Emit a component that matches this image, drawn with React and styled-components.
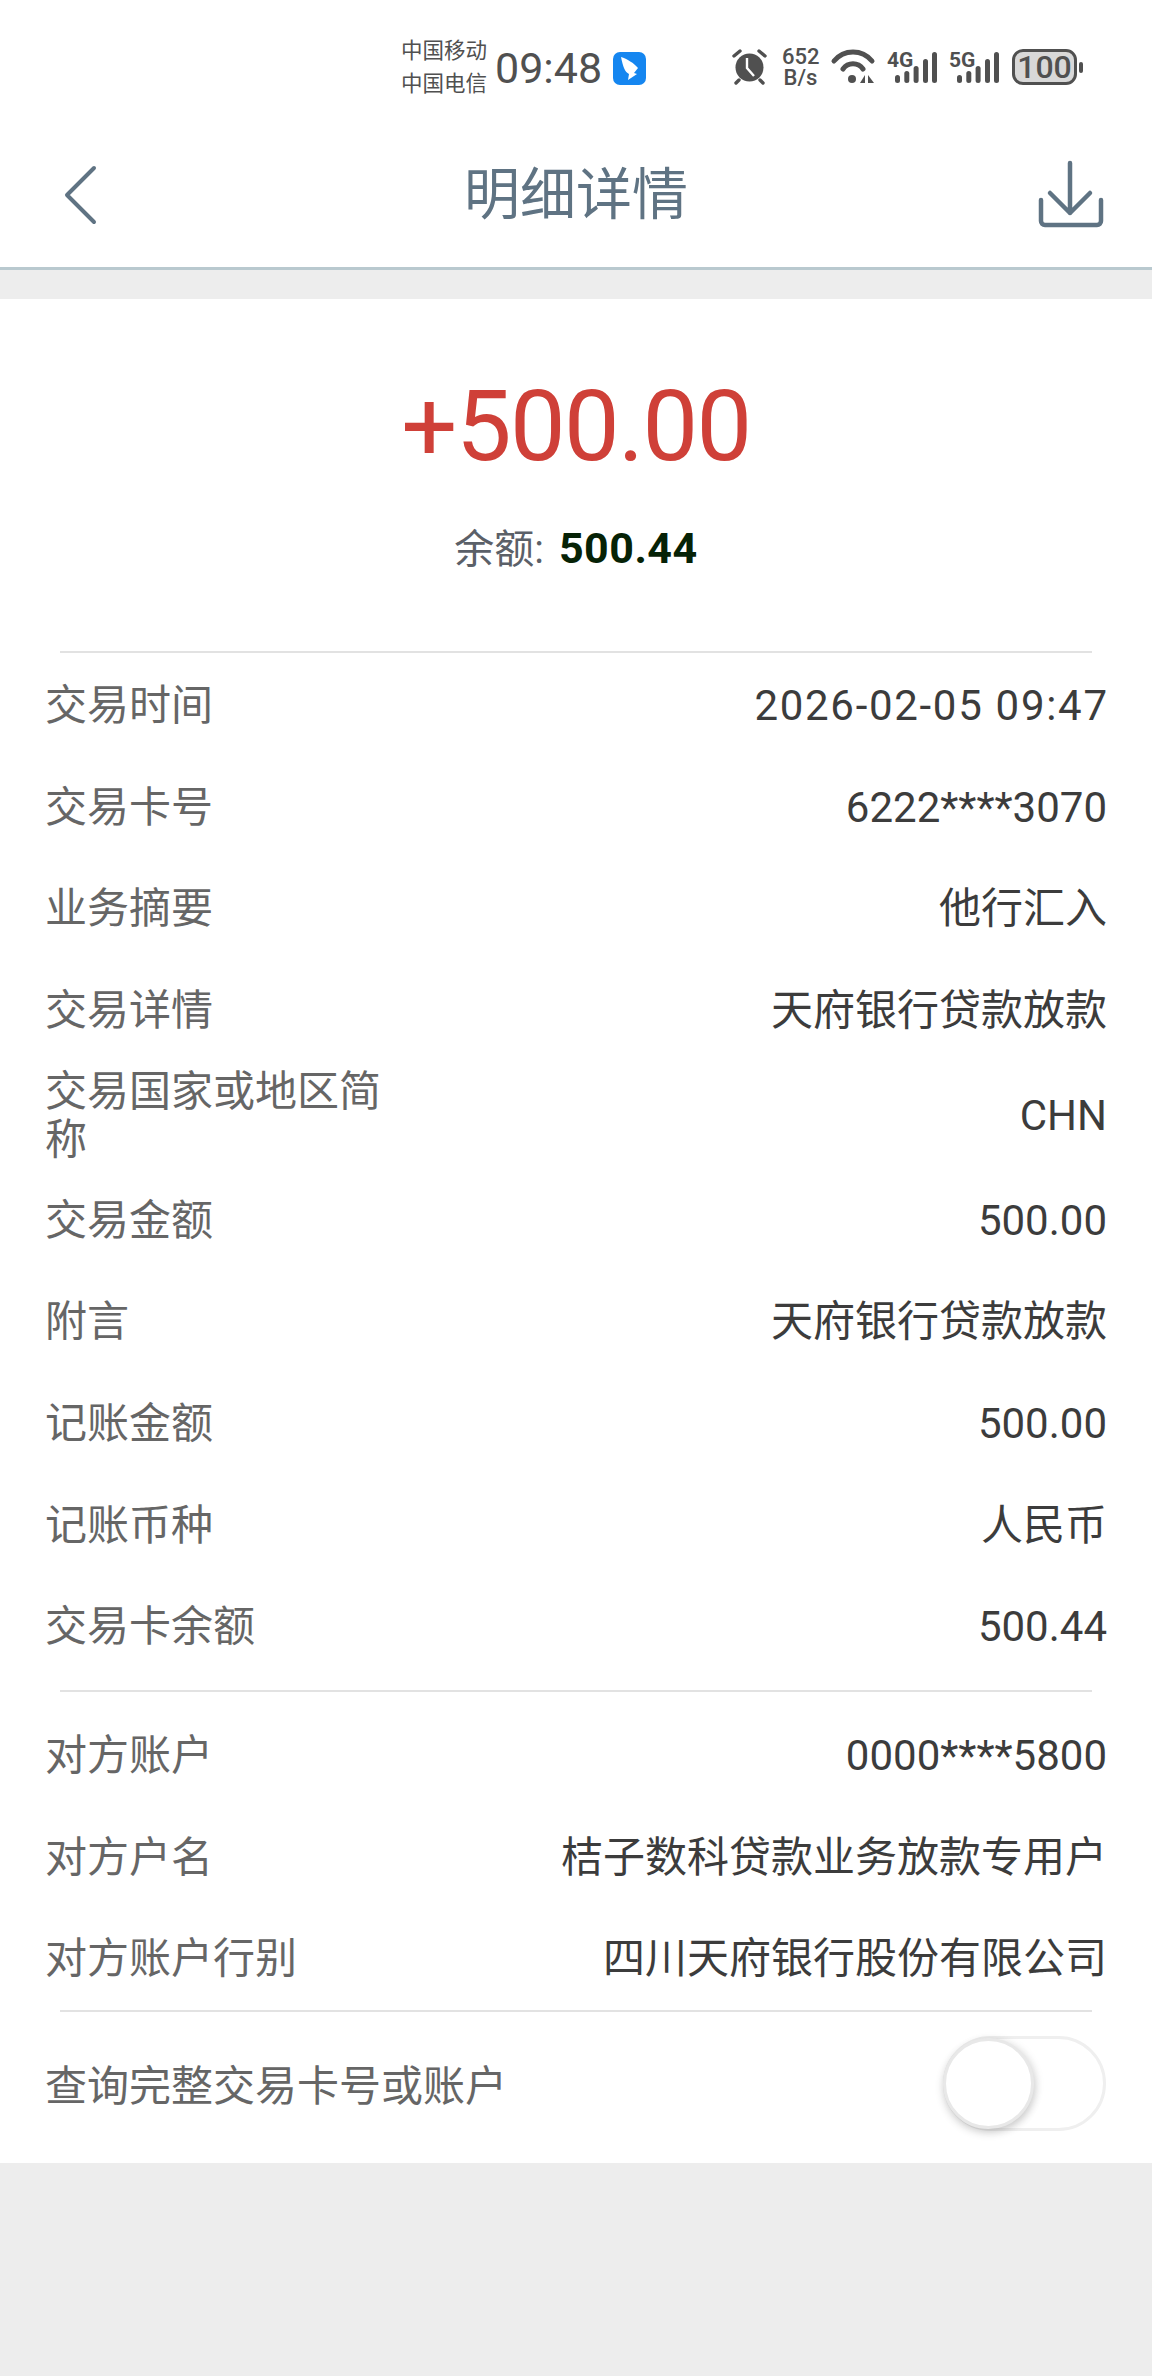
import React from "react";
import styled, { createGlobalStyle } from "styled-components";

const Global = createGlobalStyle`
  html, body { margin: 0; padding: 0; background: #ededed; }
  body { font-family: "Roboto", "Noto Sans CJK SC", sans-serif; }
`;
const Page = styled.div`
  width: 1152px; height: 2376px; background: #ededed; display: flex; flex-direction: column; overflow: hidden;
`;
const TopArea = styled.header`
  background: #fff; height: 267px; border-bottom: 3px solid #b9c9cf; flex: none; display: flex; flex-direction: column;
`;
const StatusBar = styled.div`
  height: 133px; flex: none; display: flex; align-items: flex-start; padding: 32px 0 0 401px; color: #505050; box-sizing: border-box;
`;
const Carriers = styled.div`
  width: 90px; font-size: 21.5px; line-height: 33px; margin-top: 2px; flex: none; white-space: nowrap;
`;
const Clock = styled.div`
  font-size: 43px; line-height: 52px; margin-left: 4px; width: 108px; margin-top: 10px; flex: none; white-space: nowrap;
`;
const Indicators = styled.div`
  display: flex; align-items: center; height: 40px; margin-top: 15px;
`;
const AppIcon = styled.svg`width: 33px; height: 33px; margin: 3px 0 0 10px; flex: none;`;
const AlarmIcon = styled.svg`width: 36px; height: 36px; margin-left: 86px; flex: none;`;
const Speed = styled.div`
  font-size: 22px; line-height: 21px; width: 37px; margin-left: 14px; text-align: center; flex: none; white-space: nowrap; font-weight: 500;
`;
const WifiIcon = styled.svg`width: 46px; height: 36px; margin-left: 11px; flex: none;`;
const SignalIcon = styled.svg`width: 50px; height: 44px; margin-left: ${p => p.$gap}px; flex: none;`;
const Battery = styled.div`
  width: 65px; height: 36px; margin-left: 13px; box-sizing: border-box; border: 3px solid #505050; border-radius: 11px; background: #d8d8d8;
  display: flex; align-items: center; justify-content: center; font-size: 32px; font-weight: 500; line-height: 30px; position: relative; flex: none;
  &::after { content: ""; position: absolute; right: -9px; top: 10px; width: 4px; height: 11px; border-radius: 2px; background: #505050; }
`;
const NavBar = styled.div`
  flex: 1; display: flex; align-items: center; justify-content: space-between; padding: 0 47px 0 60px; position: relative; margin-top: -10px;
`;
const Title = styled.h1`
  position: absolute; left: 0; right: 0; margin: 0; text-align: center; font-size: 56px; font-weight: 400; color: #5f7383; line-height: 70px;
`;
const BackIcon = styled.svg`width: 40px; height: 60px; flex: none;`;
const SaveIcon = styled.svg`width: 70px; height: 70px; flex: none;`;
const Card = styled.main`
  margin-top: 29px; background: #fff; height: 1864px; flex: none; display: flex; flex-direction: column;
`;
const Hero = styled.section`
  height: 352px; box-sizing: border-box; padding-top: 67px; display: flex; flex-direction: column; align-items: center; flex: none;
`;
const Amount = styled.div`
  font-size: 99px; line-height: 120px; color: #cf4038; letter-spacing: -1.6px;
`;
const Balance = styled.div`
  font-size: 40px; line-height: 52px; color: #5b6068; margin-top: 36px;
  b { color: #062206; font-size: 43px; font-weight: 700; margin-left: 5px; letter-spacing: 0.5px; }
`;
const Divider = styled.div`
  height: 2px; background: #e2e2e2; margin: 0 60px; flex: none;
`;
const Section = styled.section`
  display: flex; flex-direction: column; flex: none; padding: ${p => p.$pad};
`;
const Row = styled.div`
  display: flex; justify-content: space-between; align-items: center; height: ${p => p.$h || 101.7}px; padding: 0 45px; flex: none;
`;
const Label = styled.div`
  width: 340px; font-size: 42px; line-height: 48px; color: #666; flex: none;
`;
const Value = styled.div`
  font-size: 42px; line-height: 48px; color: #3c3c3c; text-align: right; white-space: nowrap;
  letter-spacing: ${p => (p.$wide ? "1.7px" : "0")};
  margin-right: ${p => (p.$wide ? "-1.7px" : "0")};
`;
const ToggleRow = styled.div`
  display: flex; justify-content: space-between; align-items: center; padding: 0 46px 0 45px; height: 150px; flex: none;
`;
const ToggleLabel = styled.div`font-size: 42px; line-height: 48px; color: #666;`;
const Toggle = styled.div`
  width: 163px; height: 95px; margin-bottom: 7px; box-sizing: border-box; border: 3px solid #efefef; border-radius: 48px; position: relative; background: #fff; flex: none;
`;
const Knob = styled.div`
  position: absolute; left: -3px; top: -1px; width: 91px; height: 91px; box-sizing: border-box; border-radius: 50%; background: #fff;
  border: 3px solid #e8e8e8; box-shadow: 0 4px 8px rgba(0,0,0,.16), 3px 1px 8px rgba(0,0,0,.08);
`;

const primary = [
  ["交易时间", "2026-02-05 09:47", undefined, true],
  ["交易卡号", "6222****3070"],
  ["业务摘要", "他行汇入"],
  ["交易详情", "天府银行贷款放款"],
  ["交易国家或地区简称", "CHN", 108],
  ["交易金额", "500.00"],
  ["附言", "天府银行贷款放款"],
  ["记账金额", "500.00"],
  ["记账币种", "人民币"],
  ["交易卡余额", "500.44"],
];
const other = [
  ["对方账户", "0000****5800"],
  ["对方户名", "桔子数科贷款业务放款专用户"],
  ["对方账户行别", "四川天府银行股份有限公司"],
];

const Bars = () => (
  <g fill="#505050">
    <rect x="8" y="30" width="5" height="8" rx="2.5" />
    <rect x="17.3" y="26" width="5" height="12" rx="2.5" />
    <rect x="26.6" y="21" width="5" height="17" rx="2.5" />
    <rect x="36" y="14" width="5" height="24" rx="2.5" />
    <rect x="45" y="7" width="5" height="31" rx="2.5" />
  </g>
);
const SmallLabel = ({ children }) => (
  <text x="0" y="22" fontSize="21" fontWeight="700" fill="#505050" fontFamily="Roboto, sans-serif">{children}</text>
);

export default function App() {
  return (
    <Page>
      <Global />
      <TopArea>
        <StatusBar>
          <Carriers>中国移动<br />中国电信</Carriers>
          <Clock>09:48</Clock>
          <Indicators>
            <AppIcon viewBox="0 0 33 33">
              <rect width="33" height="33" rx="7" fill="#1586f0" />
              <path d="M8 5C14 7 21 11 25 16L21 21L24 22L15 28L16 22C12 20 10 15 8 5z" fill="#fff" />
            </AppIcon>
            <AlarmIcon viewBox="0 0 36 36">
              <circle cx="17.5" cy="18.5" r="14" fill="#505050" />
              <path d="M15 9v10l7 8" stroke="#fff" strokeWidth="2.4" fill="none" />
              <path d="M2 7l6-5M33 7l-6-5M7 31l-3 3M28 31l3 3" stroke="#505050" strokeWidth="3.4" strokeLinecap="round" />
            </AlarmIcon>
            <Speed>652<br />B/s</Speed>
            <WifiIcon viewBox="0 0 46 36">
              <path d="M4 12C14 0 32 0 42 12M13 20C18 13 28 13 33 20" stroke="#505050" strokeWidth="5" fill="none" strokeLinecap="round" />
              <circle cx="22" cy="30" r="4" fill="#505050" />
              <path d="M35 26v8h-5zM38 26v8h6z" fill="#505050" />
            </WifiIcon>
            <SignalIcon viewBox="0 0 50 44" $gap={11}><SmallLabel>4G</SmallLabel><Bars /></SignalIcon>
            <SignalIcon viewBox="0 0 50 44" $gap={12}><SmallLabel>5G</SmallLabel><Bars /></SignalIcon>
            <Battery>100</Battery>
          </Indicators>
        </StatusBar>
        <NavBar>
          <BackIcon viewBox="0 0 40 60">
            <path d="M34 3L7 30l27 27" stroke="#5f7383" strokeWidth="4" fill="none" strokeLinecap="round" strokeLinejoin="round" />
          </BackIcon>
          <Title>明细详情</Title>
          <SaveIcon viewBox="0 0 70 70">
            <path d="M35 3v50M15 33l20 20 20-20" stroke="#5f7383" strokeWidth="4.5" fill="none" strokeLinecap="round" strokeLinejoin="round" />
            <path d="M6 40v21a4 4 0 0 0 4 4h52a4 4 0 0 0 4-4V40" stroke="#5f7383" strokeWidth="4.5" fill="none" strokeLinecap="round" />
          </SaveIcon>
        </NavBar>
      </TopArea>
      <Card>
        <Hero>
          <Amount>+500.00</Amount>
          <Balance>余额: <b>500.44</b></Balance>
        </Hero>
        <Divider />
        <Section $pad="2px 0 12px">
          {primary.map(([l, v, h, wide]) => (
            <Row key={l} $h={h}><Label>{l}</Label><Value $wide={wide}>{v}</Value></Row>
          ))}
        </Section>
        <Divider />
        <Section $pad="13px 0 0">
          {other.map(([l, v]) => (
            <Row key={l}><Label>{l}</Label><Value>{v}</Value></Row>
          ))}
        </Section>
        <Divider />
        <ToggleRow>
          <ToggleLabel>查询完整交易卡号或账户</ToggleLabel>
          <Toggle><Knob /></Toggle>
        </ToggleRow>
      </Card>
    </Page>
  );
}
